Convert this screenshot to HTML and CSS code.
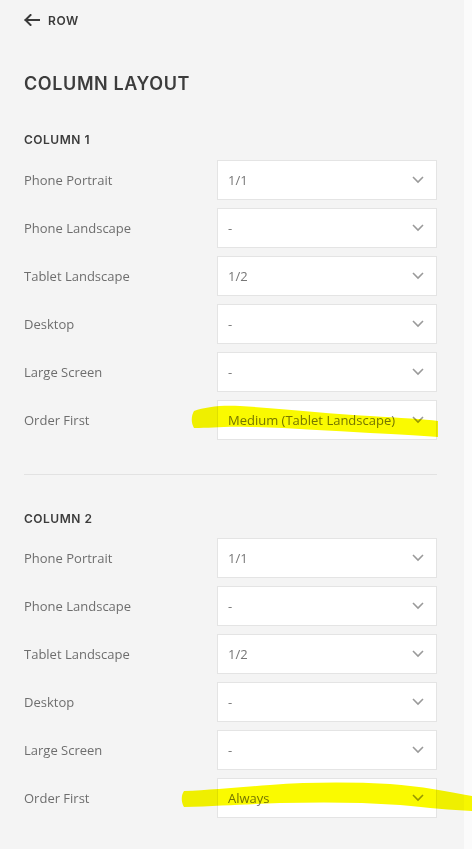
FILE: index.html
```html
<!DOCTYPE html>
<html lang="en">
<head>
<meta charset="utf-8">
<title>Column Layout</title>
<link rel="stylesheet" href="styles.css">
</head>
<body>
<div class="panel">
  <a class="back" href="#">
    <svg class="back-icon" width="16" height="12" viewBox="0 0 16 12" aria-hidden="true">
      <path d="M15.5 6H1.5M6.5 1L1.5 6l5 5" fill="none" stroke="#3a3a3a" stroke-width="2" stroke-linecap="square"/>
    </svg>
    <span>ROW</span>
  </a>

  <h1 class="title">COLUMN LAYOUT</h1>

  <section class="section">
    <h2 class="section-title">COLUMN 1</h2>
    <div class="rows">
      <div class="row"><span class="label">Phone Portrait</span><div class="select"><span>1/1</span><svg class="chev" width="12" height="8" viewBox="0 0 12 8"><path d="M1 1l5 5 5-5" fill="none" stroke="#9a9a9a" stroke-width="1.6"/></svg></div></div>
      <div class="row"><span class="label">Phone Landscape</span><div class="select"><span>-</span><svg class="chev" width="12" height="8" viewBox="0 0 12 8"><path d="M1 1l5 5 5-5" fill="none" stroke="#9a9a9a" stroke-width="1.6"/></svg></div></div>
      <div class="row"><span class="label">Tablet Landscape</span><div class="select"><span>1/2</span><svg class="chev" width="12" height="8" viewBox="0 0 12 8"><path d="M1 1l5 5 5-5" fill="none" stroke="#9a9a9a" stroke-width="1.6"/></svg></div></div>
      <div class="row"><span class="label">Desktop</span><div class="select"><span>-</span><svg class="chev" width="12" height="8" viewBox="0 0 12 8"><path d="M1 1l5 5 5-5" fill="none" stroke="#9a9a9a" stroke-width="1.6"/></svg></div></div>
      <div class="row"><span class="label">Large Screen</span><div class="select"><span>-</span><svg class="chev" width="12" height="8" viewBox="0 0 12 8"><path d="M1 1l5 5 5-5" fill="none" stroke="#9a9a9a" stroke-width="1.6"/></svg></div></div>
      <div class="row"><span class="label">Order First</span><div class="select"><span>Medium (Tablet Landscape)</span><svg class="chev" width="12" height="8" viewBox="0 0 12 8"><path d="M1 1l5 5 5-5" fill="none" stroke="#9a9a9a" stroke-width="1.6"/></svg></div></div>
    </div>
  </section>

  <hr class="divider">

  <section class="section">
    <h2 class="section-title">COLUMN 2</h2>
    <div class="rows">
      <div class="row"><span class="label">Phone Portrait</span><div class="select"><span>1/1</span><svg class="chev" width="12" height="8" viewBox="0 0 12 8"><path d="M1 1l5 5 5-5" fill="none" stroke="#9a9a9a" stroke-width="1.6"/></svg></div></div>
      <div class="row"><span class="label">Phone Landscape</span><div class="select"><span>-</span><svg class="chev" width="12" height="8" viewBox="0 0 12 8"><path d="M1 1l5 5 5-5" fill="none" stroke="#9a9a9a" stroke-width="1.6"/></svg></div></div>
      <div class="row"><span class="label">Tablet Landscape</span><div class="select"><span>1/2</span><svg class="chev" width="12" height="8" viewBox="0 0 12 8"><path d="M1 1l5 5 5-5" fill="none" stroke="#9a9a9a" stroke-width="1.6"/></svg></div></div>
      <div class="row"><span class="label">Desktop</span><div class="select"><span>-</span><svg class="chev" width="12" height="8" viewBox="0 0 12 8"><path d="M1 1l5 5 5-5" fill="none" stroke="#9a9a9a" stroke-width="1.6"/></svg></div></div>
      <div class="row"><span class="label">Large Screen</span><div class="select"><span>-</span><svg class="chev" width="12" height="8" viewBox="0 0 12 8"><path d="M1 1l5 5 5-5" fill="none" stroke="#9a9a9a" stroke-width="1.6"/></svg></div></div>
      <div class="row"><span class="label">Order First</span><div class="select"><span>Always</span><svg class="chev" width="12" height="8" viewBox="0 0 12 8"><path d="M1 1l5 5 5-5" fill="none" stroke="#9a9a9a" stroke-width="1.6"/></svg></div></div>
    </div>
  </section>
</div>

<svg class="marker" width="472" height="849" viewBox="0 0 472 849" aria-hidden="true">
  <path d="M194 411 C205 407 220 405 240 406 C290 409 330 414 370 416 C400 418 425 419 438 421 L438 437 C420 436 400 434 370 433 C330 431 290 428 250 427 C225 426 210 428 194 428 C191 423 191 416 194 411 Z" fill="#fafa00"/>
  <path d="M184 791 C210 790 240 787 270 785 C310 782 350 782 390 784 C420 786 450 792 472 796 L472 811 C450 810 430 808 400 805 C360 802 320 802 280 803 C250 804 220 806 184 807 C181 802 181 795 184 791 Z" fill="#fafa00"/>
</svg>
</body>
</html>
```

FILE: styles.css
```css
html, body {
  margin: 0;
  padding: 0;
}

body {
  background: #fbfbfb;
  font-family: "Open Sans", "Liberation Sans", sans-serif;
  position: relative;
  width: 472px;
  min-height: 849px;
}

.panel {
  box-sizing: border-box;
  width: 464px;
  min-height: 849px;
  background: #f4f4f4;
  padding: 0 27px 30px 24px;
}

.back {
  display: flex;
  align-items: center;
  gap: 8px;
  height: 40px;
  text-decoration: none;
  color: #3a3a3a;
  font-family: "Inter", "Liberation Sans", sans-serif;
  font-weight: 600;
  font-size: 12px;
  letter-spacing: 0.6px;
}

.back-icon {
  display: block;
}

.title {
  margin: 32px 0 0;
  font-family: "Inter", "Liberation Sans", sans-serif;
  font-weight: 600;
  font-size: 18px;
  line-height: 24px;
  letter-spacing: 0.6px;
  color: #3c3c3c;
}

.section {
  margin-top: 36px;
}

.section-title {
  margin: 0 0 12px;
  font-family: "Inter", "Liberation Sans", sans-serif;
  font-weight: 600;
  font-size: 12px;
  line-height: 16px;
  letter-spacing: 0.5px;
  color: #3c3c3c;
}

.rows {
  display: flex;
  flex-direction: column;
  gap: 8px;
}

.row {
  display: flex;
  align-items: center;
  justify-content: space-between;
  height: 40px;
}

.label {
  font-size: 13px;
  color: #6e6e6e;
}

.select {
  box-sizing: border-box;
  width: 220px;
  height: 40px;
  background: #ffffff;
  border: 1px solid #e4e4e4;
  display: flex;
  align-items: center;
  justify-content: space-between;
  padding: 0 12px 0 10px;
  font-size: 13px;
  color: #777777;
}

.chev {
  display: block;
}

.divider {
  margin: 34px 0 0;
  border: 0;
  height: 1px;
  background: #e2e2e2;
}

.divider + .section {
  margin-top: 36px;
}

.divider + .section .section-title {
  margin-bottom: 11px;
}

.marker {
  position: absolute;
  top: 0;
  left: 0;
  pointer-events: none;
  mix-blend-mode: multiply;
}
```
